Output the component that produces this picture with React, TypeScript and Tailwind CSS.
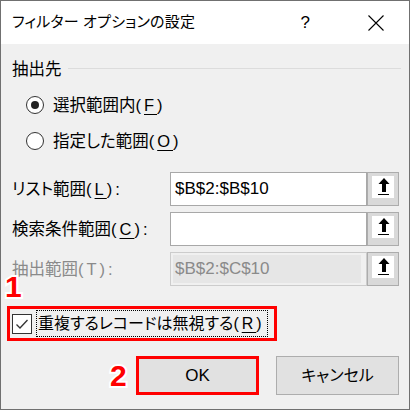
import React from "react";

const font = "font-['Liberation_Sans','Noto_Sans_CJK_JP',sans-serif] [font-feature-settings:'palt']";

function ArrowButton() {
  return (
    <div className="w-[32px] h-[34px] border border-[#acacac] bg-[#d9d9d9] pt-[3px] pl-[4px]">
      <div className="w-[22px] h-[22px] bg-white">
        <svg width="22" height="22" viewBox="0 0 22 22">
          <polygon points="12,2 6.5,8 17.5,8" fill="#000" />
          <rect x="10" y="7.5" width="4" height="8.5" fill="#000" />
          <rect x="6" y="18" width="11" height="1" fill="#000" />
        </svg>
      </div>
    </div>
  );
}

function Radio({ checked }: { checked?: boolean }) {
  return (
    <div className="w-[18px] h-[18px] rounded-full border border-[#333] bg-white flex items-center justify-center">
      {checked && <div className="w-[8px] h-[8px] rounded-full bg-[#222]" />}
    </div>
  );
}

function Key({ k }: { k: string }) {
  return (
    <span className="tracking-[3px]">
      (<span className="underline underline-offset-[3px]">{k}</span>)
    </span>
  );
}

export default function App() {
  return (
    <div className={`${font} relative w-[410px] h-[410px] border border-[#707070] bg-[#f0f0f0] flex flex-col text-black`}>
      {/* Title bar */}
      <div className="h-[43px] bg-white flex items-center pl-[11px] pr-[25px]">
        <span className="text-[15px] tracking-[0.2px]">フィルター オプションの設定</span>
        <div className="ml-auto flex items-center gap-[58px]">
          <span className="text-[17px] font-['Liberation_Sans']">?</span>
          <svg width="16" height="16" viewBox="0 0 16 16">
            <path d="M0.5 0.5 L15.5 15.5 M15.5 0.5 L0.5 15.5" stroke="#000" strokeWidth="1.1" />
          </svg>
        </div>
      </div>

      {/* Body */}
      <div className="flex flex-col pl-[11px] text-[16.5px]">
        <div className="mt-[15px] h-[20px] flex items-center pr-[8px]">
          <span>抽出先</span>
          <div className="flex-1 h-px bg-[#dcdcdc] ml-[6px] mt-[-2px]" />
        </div>

        <div className="mt-[14px] h-[24px] flex items-center pl-[14px] gap-[9px]">
          <Radio checked />
          <span>
            選択範囲内<Key k="F" />
          </span>
        </div>
        <div className="mt-[12px] h-[24px] flex items-center pl-[14px] gap-[9px]">
          <Radio />
          <span>
            指定した範囲<Key k="O" />
          </span>
        </div>

        <div className="mt-[19px] flex flex-col gap-[6px]">
          <div className="flex items-center h-[34px]">
            <span className="w-[158px]">
              リスト範囲<Key k="L" />:
            </span>
            <div className="w-[197px] h-[34px] border border-[#a8a8a8] bg-white flex items-center pl-[4px] text-[17px] font-['Liberation_Sans']">
              $B$2:$B$10
            </div>
            <ArrowButton />
          </div>
          <div className="flex items-center h-[34px]">
            <span className="w-[158px]">
              検索条件範囲<Key k="C" />:
            </span>
            <div className="w-[197px] h-[34px] border border-[#a8a8a8] bg-white" />
            <ArrowButton />
          </div>
          <div className="flex items-center h-[34px]">
            <span className="w-[158px] text-[#8a8a8a]">
              抽出範囲<span className="tracking-[3px]">(T)</span>:
            </span>
            <div className="w-[197px] h-[34px] border border-[#cccccc] bg-[#f0f0f0] p-[2px] pr-[5px]">
              <div className="h-full bg-[#e6e6e6] flex items-center pl-[2px] text-[17px] text-[#8a8a8a] font-['Liberation_Sans']">
                $B$2:$C$10
              </div>
            </div>
            <ArrowButton />
          </div>
        </div>

        {/* Checkbox highlighted */}
        <div className="mt-[20px] -ml-[5px] w-[270px] h-[35px] border-[3px] border-[#ff0000] flex items-center pl-[2px] text-[16px]">
          <div className="w-[20px] h-[20px] border border-[#333] bg-white flex items-center justify-center">
            <svg width="16" height="16" viewBox="0 0 16 16">
              <path d="M2.5 8.5 L6 12 L13.5 4" fill="none" stroke="#333" strokeWidth="1.3" />
            </svg>
          </div>
          <div className="ml-[4px] h-[27px] border border-dotted border-black flex items-center pl-[1px] pr-[2px] whitespace-nowrap">
            重複するレコードは無視する<Key k="R" />
          </div>
        </div>

        {/* Buttons */}
        <div className="mt-[15px] flex justify-end gap-[17px] pr-[10px]">
          <div className="w-[123px] h-[39px] border-[3px] border-[#ff0000] bg-[#e1e1e1] flex items-center justify-center text-[17px]">
            OK
          </div>
          <div className="w-[123px] h-[39px] border border-[#adadad] bg-[#e1e1e1] flex items-center justify-center text-[16px]">
            キャンセル
          </div>
        </div>
      </div>

      {/* Annotations */}
      <span className="absolute left-[4px] top-[271px] text-[30px] leading-none font-bold text-[#ff0000] font-['Liberation_Sans'] [-webkit-text-stroke:4px_white] [paint-order:stroke_fill]">
        1
      </span>
      <span className="absolute left-[109px] top-[360px] text-[30px] leading-none font-bold text-[#ff0000] font-['Liberation_Sans'] [-webkit-text-stroke:4px_white] [paint-order:stroke_fill]">
        2
      </span>
    </div>
  );
}
